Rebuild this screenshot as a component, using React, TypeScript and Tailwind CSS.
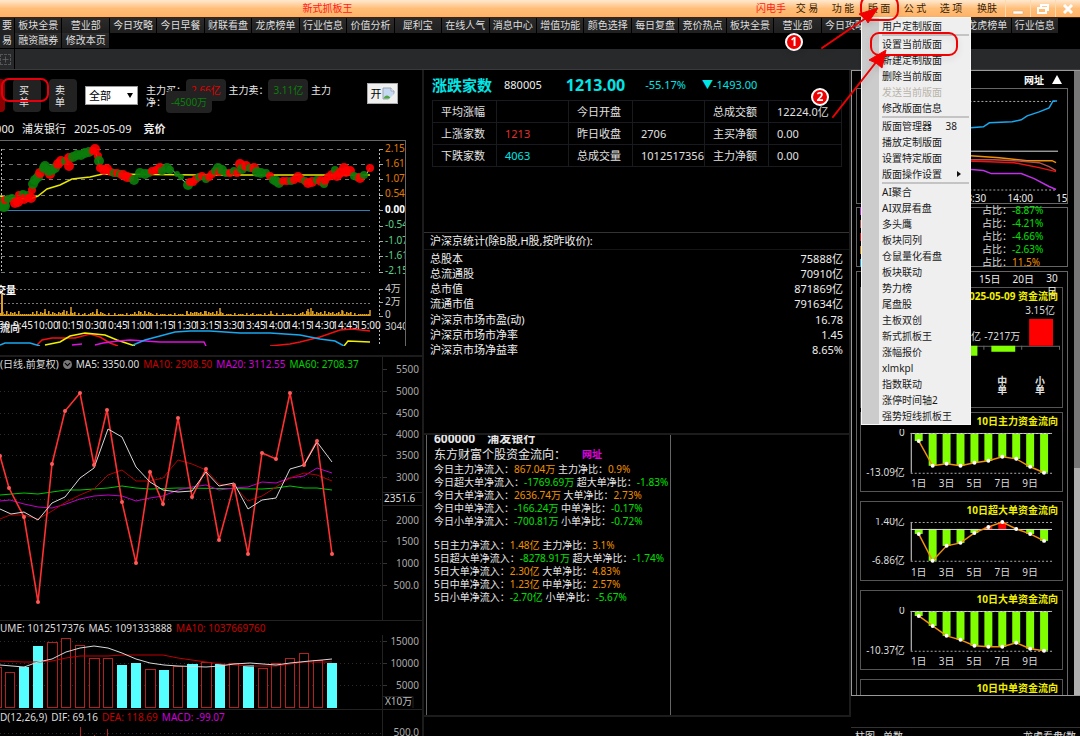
import React from 'react';
import { ChevronDown, Plus } from 'lucide-react';

const navItems = [
  '板块全景', '营业部', '今日攻略', '今日早餐', '财联看盘', '龙虎榜单', '行业信息', '价值分析',
  '犀利宝', '在线人气', '消息中心', '增值功能', '颜色选择', '每日复盘', '竞价热点', '板块全景',
  '营业部', '今日攻略', '今日早餐', '财联看盘', '龙虎榜单', '行业信息',
];

const menuGroups: { label: string; hint?: string; disabled?: boolean; sub?: boolean }[][] = [
  [{ label: '用户定制版面' }],
  [
    { label: '设置当前版面' },
    { label: '新建定制版面' },
    { label: '删除当前版面' },
    { label: '发送当前版面', disabled: true },
    { label: '修改版面信息' },
  ],
  [
    { label: '版面管理器', hint: '38' },
    { label: '播放定制版面' },
    { label: '设置特定版面' },
    { label: '版面操作设置', sub: true },
  ],
  [
    'AI聚合', 'AI双屏看盘', '多头鹰', '板块同列', '仓鼠量化看盘', '板块联动', '势力榜', '尾盘股',
    '主板双创', '新式抓板王', '涨幅报价', 'xlmkpl', '指数联动', '涨停时间轴2', '强势短线抓板王',
  ].map((label) => ({ label })),
];

const R = '#ff0000';
const G = '#0b7d0b';

// x, y, radius, colour
const ticks: [number, number, number, string][] = [
  [2, 204, 7, G], [4, 206, 6, G], [5, 200, 4, R], [8, 199, 4, G], [12, 198, 4, G], [15, 203, 5, R],
  [18, 202, 5, R], [19, 195, 4, R], [23, 194, 4, G], [24, 199, 5, R], [28, 195, 4, G], [28, 198, 4, R],
  [31, 198, 5, R], [32, 190, 4, R], [33, 184, 5, G], [35, 180, 5, G], [38, 177, 5, G], [40, 173, 5, R],
  [44, 168, 5, G], [45, 166, 5, G], [50, 174, 5, R], [49, 171, 5, G], [52, 170, 5, G], [55, 168, 5, G],
  [58, 164, 5, R], [61, 161, 5, R], [65, 161, 4, G], [69, 166, 5, R], [69, 158, 5, R], [73, 157, 5, G],
  [77, 155, 5, G], [81, 155, 5, G], [85, 153, 5, G], [89, 152, 5, G], [95, 149, 5, R], [93, 151, 4, R],
  [98, 156, 4, R], [99, 161, 5, G], [100, 168, 4, R], [104, 170, 5, R], [107, 169, 5, R], [111, 172, 4, R],
  [114, 173, 4, G], [117, 173, 4, R], [120, 174, 4, G], [123, 175, 5, R], [127, 177, 5, R], [130, 178, 4, R],
  [134, 180, 5, G], [140, 173, 5, G], [145, 174, 5, G], [149, 173, 4, G], [152, 171, 4, R], [156, 170, 4, R],
  [160, 168, 5, R], [162, 171, 4, G], [167, 168, 5, G], [170, 170, 4, G], [177, 174, 3, G], [181, 177, 3, G],
  [188, 185, 5, G], [190, 182, 4, R], [193, 182, 4, R], [196, 179, 4, R], [199, 177, 4, G], [202, 176, 4, R],
  [206, 179, 4, G], [209, 177, 4, R], [212, 174, 4, R], [215, 171, 4, G], [218, 168, 5, G], [219, 172, 4, R],
  [222, 170, 5, G], [226, 173, 4, G], [230, 173, 4, R], [234, 171, 4, G], [237, 173, 4, R], [240, 164, 5, R],
  [242, 169, 5, G], [246, 166, 5, R], [250, 168, 4, G], [254, 168, 5, R], [257, 172, 5, G], [261, 173, 5, G],
  [266, 173, 4, G], [270, 176, 4, R], [273, 180, 4, G], [276, 181, 5, G], [279, 183, 5, G], [283, 181, 4, R],
  [287, 181, 4, R], [291, 181, 4, G], [294, 180, 4, R], [298, 177, 5, R], [301, 179, 4, R], [305, 181, 4, G],
  [308, 183, 5, R], [312, 182, 5, R], [317, 180, 4, G], [321, 181, 5, R], [324, 184, 4, G], [325, 181, 4, R],
  [328, 177, 4, R], [332, 175, 5, R], [335, 170, 4, G], [337, 176, 5, R], [340, 173, 5, R], [344, 168, 5, R],
  [346, 172, 5, R], [350, 171, 5, R], [354, 176, 4, G], [357, 177, 4, G], [360, 178, 5, R], [364, 175, 4, G],
  [370, 168, 4, R],
];

const times = ['9:30', '9:45', '10:00', '10:15', '10:30', '10:45', '11:00', '11:15', '11:30', '13:15', '13:30', '13:45', '14:00', '14:15', '14:30', '14:45', '15:00'];

// busy stretches of the session trade roughly two steps higher
const busy: [number, number][] = [[0, 20], [32, 74], [90, 102], [134, 150], [186, 222], [300, 350]];
const minuteBars = Array.from({ length: 185 }, (_, i) => {
  const x = i * 2;
  const lift = busy.some(([from, to]) => x >= from && x <= to) ? 2 : 1;
  return { x, h: lift + ((i * 37 + (i % 7) * 5) % 4 > 1 ? lift : 0) + (i % 3 === 0 ? 1 : 0) };
});

const percentLabels: [number, string, string][] = [
  [149, '2.15%', '#e07b00'], [164, '1.61%', '#e07b00'], [179, '1.07%', '#e07b00'], [194, '0.54%', '#e07b00'],
  [210, '0.00%', '#ffffff'], [225, '-0.54%', '#5fd08a'], [241, '-1.07%', '#5fd08a'], [256, '-1.61%', '#5fd08a'], [271, '-2.15%', '#5fd08a'],
];

const pricePoints: [number, number][] = [
  [-4, 441], [0, 456], [9, 488], [24, 517], [38, 602], [52, 464], [65, 411], [80, 393], [94, 465], [107, 410],
  [122, 502], [136, 563], [150, 472], [163, 504], [178, 418], [192, 497], [206, 469], [219, 540], [234, 485],
  [248, 554], [262, 453], [276, 459], [290, 393], [304, 465], [317, 441], [332, 554],
];

// x, width, top, rising
const volumeBars: [number, number, number, boolean][] = [
  [-8, 10, 667, true], [5, 10, 672, true], [19, 10, 667, false], [33, 10, 646, false], [47, 11, 642, true],
  [61, 10, 638, true], [75, 10, 645, true], [89, 11, 658, true], [103, 10, 658, true], [117, 10, 665, false],
  [131, 10, 663, false], [145, 11, 669, true], [159, 10, 670, false], [173, 10, 666, true], [187, 11, 664, false],
  [201, 11, 662, true], [215, 10, 664, false], [229, 10, 663, true], [243, 11, 665, false], [258, 10, 668, true],
  [271, 10, 663, true], [285, 10, 658, true], [299, 10, 653, true], [313, 10, 660, true], [327, 10, 663, false],
];

const flows: [string, string, string, string][][] = [
  [
    ['今日主力净流入：', '867.04万', '主力净比：', '0.9%'],
    ['今日超大单净流入：', '-1769.69万', '超大单净比：', '-1.83%'],
    ['今日大单净流入：', '2636.74万', '大单净比：', '2.73%'],
    ['今日中单净流入：', '-166.24万', '中单净比：', '-0.17%'],
    ['今日小单净流入：', '-700.81万', '小单净比：', '-0.72%'],
  ],
  [
    ['5日主力净流入：', '1.48亿', '主力净比：', '3.1%'],
    ['5日超大单净流入：', '-8278.91万', '超大单净比：', '-1.74%'],
    ['5日大单净流入：', '2.30亿', '大单净比：', '4.83%'],
    ['5日中单净流入：', '1.23亿', '中单净比：', '2.57%'],
    ['5日小单净流入：', '-2.70亿', '小单净比：', '-5.67%'],
  ],
];

const tenDayCards = [
  { title: '10日主力资金流向', top: '0', low: '-13.09亿', topY: 4, zero: 4, lowY: 44, ys: [12, 37, 35, 37, 34, 32, 28, 30, 38, 44] },
  { title: '10日超大单资金流向', top: '1.40亿', low: '-6.86亿', topY: 4, zero: 11, lowY: 43, ys: [16, 43, 28, 25, 15, 9, 4, 11, 16, 23] },
  { title: '10日大单资金流向', top: '0', low: '-10.37亿', topY: 4, zero: 4, lowY: 44, ys: [9, 19, 29, 33, 39, 40, 40, 36, 42, 44] },
];

const TitleBar = () => (
  <header className="relative z-30 flex h-[18px] items-stretch border-b border-[#3a2410] bg-linear-to-b from-[#ffe9cf] via-[#ffbe78] to-[#ffb266]">
    <h1 className="flex-1 pl-[28%] text-[10px] leading-[17px] text-[#ff1a1a]">新式抓板王</h1>
    <nav className="flex text-[10px] leading-[17px] text-[#3a1d05]">
      <button className="w-9 text-[#ff1a1a]">闪电手</button>
      <button className="w-9">交 易</button>
      <button className="w-9">功 能</button>
      <div className="relative w-9">
        <button className="w-full">版 面</button>
        <LayoutMenu />
      </div>
      <button className="w-9">公 式</button>
      <button className="w-9">选 项</button>
      <button className="w-9">换肤</button>
    </nav>
    <div className="flex text-white">
      <button aria-label="最小化" className="flex w-[25px] items-center justify-center border-l border-[#ffd9ae]">
        <svg viewBox="0 0 12 12" className="size-3"><path d="M1 8h10v3H1Z" fill="#fff" stroke="#d9a06a" strokeWidth="0.500" /></svg>
      </button>
      <button aria-label="还原" className="flex w-[25px] items-center justify-center border-l border-[#ffd9ae]">
        <svg viewBox="0 0 12 12" className="size-3" fill="none" stroke="#fff" strokeWidth="2"><path d="M4 4V2h7v5H9M1 5h8v5H1Z" /></svg>
      </button>
      <button aria-label="关闭" className="flex w-[25px] items-center justify-center border-l border-[#ffd9ae]">
        <svg viewBox="0 0 12 12" className="size-3" stroke="#fff" strokeWidth="3"><path d="M2 2l8 8M10 2l-8 8" /></svg>
      </button>
    </div>
  </header>
);

const LayoutMenu = () => (
  <div className="absolute left-0 top-[17px] w-[110px] border border-[#f8f8f8] bg-[#efefef] text-[#1a1a1a] shadow">
    <div className="border-l-[17px] border-[#cccccc]">
      {menuGroups.map((group, i) => (
        <ul key={i} className={`ml-[3px] mr-px ${i > 0 ? 'border-t-2 border-[#c4c4c4]' : ''}`}>
          {group.map((item) => (
            <li key={item.label}>
              <button
                disabled={item.disabled}
                className={`flex h-4 w-full items-center pr-2 text-left text-[10px] leading-4 ${item.disabled ? 'text-[#b9b4aa]' : ''}`}
              >
                <span className="flex-1">{item.label}</span>
                {item.hint && <span className="pr-1">{item.hint}</span>}
                {item.sub && <svg viewBox="0 0 4 6" className="h-[6px] w-1"><path d="M0 0 4 3 0 6Z" fill="#111" /></svg>}
              </button>
            </li>
          ))}
        </ul>
      ))}
    </div>
  </div>
);

const NavBar = () => (
  <nav className="flex text-[10px] text-[#dedede]">
    <div className="grid w-[14px] shrink-0 grid-rows-2 overflow-hidden">
      <button className="h-[15px] bg-[#222222] leading-[15px]">要</button>
      <button className="h-[15px] bg-[#222222] leading-[15px]">易</button>
    </div>
    <div className="mr-[22px] grid flex-1 grid-cols-22">
      {[...navItems, '融资融券', '修改本页'].map((item, i) => (
        <button key={i} className="h-[15px] overflow-hidden border-l border-black bg-linear-to-b from-[#2b2b2b] to-[#1f1f1f] leading-[15px]">
          {item}
        </button>
      ))}
    </div>
  </nav>
);

const line = (points: [number, number][]) => points.map((p) => p.join(',')).join(' ');

const IntradayChart = () => (
  <svg viewBox="0 141 405 205" className="block w-full" fontSize="10">
    {[149, 164, 179, 195, 226, 241, 256, 272].map((y) => (
      <path key={y} d={`M1 ${y}.5H370`} stroke="#777" strokeDasharray="4 4" />
    ))}
    <path d="M0 289.500H371M0 303.500H371" stroke="#777" strokeDasharray="2 2" />
    <path d="M1.500 149V272M379.500 149V272M379.500 289V316M379.500 326V346" stroke="#bbb" strokeDasharray="2 2" />
    {[149, 164, 179, 195, 210, 226, 241, 256, 272, 289, 302, 316].map((y) => (
      <path key={y} d={`M379 ${y}.5h4`} stroke="#aaa" />
    ))}
    <path d="M0 210.500H370" stroke="#2f7fb5" />
    <path d="M0 196 8 198 30 199 38 196 47 189 60 185 72 179 90 177 103 174 200 175 370 175" fill="none" stroke="#e8e800" strokeWidth="1.500" />
    <path d="M95 150 100 167M168 166 188 185M366 175 370 168" stroke="#ddd" />
    {ticks.map(([x, y, r, color], i) => (
      <circle key={i} cx={x} cy={y} r={r} fill={color} opacity="0.9" />
    ))}
    {percentLabels.map(([y, label, color]) => (
      <text key={label} x="385" y={y + 3} fill={color} fontWeight={label === '0.00%' ? 'bold' : 'normal'}>{label}</text>
    ))}
    {minuteBars.map(({ x, h }) => (
      <rect key={x} x={x} y={316 - h} width="1.600" height={h} fill="#dda020" />
    ))}
    <path d="M2 294V316" stroke="#dda020" strokeWidth="2" />
    <path d="M45 309V316M64 310V316M71 307V316M97 309V316M187 311V316M206 311V316M220 308V316M271 311V316M308 309V316M311 308V316M342 310V316M370 310V316" stroke="#dda020" strokeWidth="1.500" />
    <path d="M0 315.500H370" stroke="#dda020" />
    <text x="16" y="294" fill="#fff" textAnchor="end" fontWeight="bold">交量</text>
    <text x="20" y="332" fill="#ddd" textAnchor="end" fontWeight="bold">流向</text>
    {times.map((time, i) => (
      <text key={time} x={i * 23} y="329" fill="#eee" textAnchor="middle">{time}</text>
    ))}
    {[['4万', 292], ['2万', 305], ['0', 318], ['3040', 330]].map(([label, y]) => (
      <text key={label} x="385" y={y} fill="#ccc">{label}</text>
    ))}
    <g fill="none" strokeWidth="1.500">
      <path d="M37 345 42 340 52 338 75 338 90 334 100 337 110 343 118 346M270 346 290 344 300 342 320 337 340 330 352 329 370 331" stroke="#f01010" />
      <path d="M45 345 60 342 70 336 85 333 105 335 117 340 135 346M344 346 348 341 370 342" stroke="#f0f000" />
      <path d="M72 345 82 344M95 345 103 343 118 341 130 340 160 342 204 342 206 346" stroke="#e010e0" />
      <path d="M0 345 5 343 30 343 40 346M133 345 145 340 160 336 175 332 190 331 210 331 240 333 270 333 300 335 320 339 335 341 344 346" stroke="#18a8f0" />
    </g>
  </svg>
);

const KlineChart = () => (
  <svg viewBox="0 371 422 249" className="block w-full overflow-visible" fontSize="10">
    {[391, 413, 434, 455, 477, 499, 520, 541, 563, 585].map((y) => (
      <path key={y} d={`M0 ${y}.5H382`} stroke="#2a2a2a" strokeDasharray="1 3" />
    ))}
    <path d="M382.500 357V620" stroke="#222" />
    {[369, 391, 413, 434, 455, 477, 520, 541, 563, 585].map((y, i) => (
      <g key={y}>
        <path d={`M383 ${y}.5h4`} stroke="#333" />
        <text x="419" y={y + 4} fill="#a8a8a8" textAnchor="end">
          {['5500', '5000', '4500', '4000', '3500', '3000', '2000', '1500', '1000', '500.0'][i]}
        </text>
      </g>
    ))}
    <path d="M383 492.500H422M383 505.500H422" stroke="#222" />
    <text x="384" y="502" fill="#ddd">2351.6</text>
    <g fill="none">
      <polyline stroke="#00c800" points="0,495 24,493 38,494 52,492 66,490 80,490 94,489 108,488 122,486 136,488 150,489 178,488 262,489 276,488 290,486 304,488 317,488 332,490" />
      <polyline stroke="#c000c8" points="0,501 10,500 24,504 38,507 52,508 66,504 80,499 94,496 108,495 122,496 136,501 150,498 163,496 178,490 192,487 206,485 219,490 234,488 248,487 262,482 276,483 290,478 304,476 317,468 332,473" />
      <polyline stroke="#b00000" points="0,519 10,515 24,515 38,519 52,511 66,502 80,495 94,489 108,475 122,470 136,481 150,481 163,478 178,460 192,464 206,470 219,484 234,486 248,501 262,496 276,487 290,478 304,473 317,475 332,481" />
      <polyline stroke="#ff3030" strokeWidth="1.600" points={line(pricePoints)} />
      <polyline stroke="#d8d8d8" points="0,509 11,514 24,512 38,520 52,503 65,497 80,478 94,468 108,429 122,437 136,467 150,482 163,490 178,492 192,491 206,472 219,486 234,483 248,509 262,500 276,498 290,469 304,465 317,442 332,462" />
    </g>
    {pricePoints.map(([x, y], i) => (
      <circle key={i} cx={x} cy={y} r="2" fill="#ff5a5a" />
    ))}
  </svg>
);

const VolumeChart = () => (
  <svg viewBox="0 635 422 74" className="block w-full" fontSize="10">
    {[641, 663, 685].map((y, i) => (
      <g key={y}>
        <path d={`M0 ${y}.5H382`} stroke="#2a2a2a" strokeDasharray="1 3" />
        <path d={`M383 ${y}.5h4`} stroke="#333" />
        <text x="419" y={y + 4} fill="#a8a8a8" textAnchor="end">{['15000', '10000', '5000'][i]}</text>
      </g>
    ))}
    <path d="M382.500 635V709" stroke="#222" />
    {volumeBars.map(([x, w, top, up]) => up ? (
      <rect key={x} x={x + 0.5} y={top + 0.5} width={w - 1} height={707 - top} fill="#000" stroke="#b32020" />
    ) : (
      <rect key={x} x={x} y={top} width={w} height={708 - top} fill="#55ffff" />
    ))}
    <polyline fill="none" stroke="#c00000" points="0,661 24,662 38,662 52,661 66,658 80,656 108,656 122,655 163,655 178,658 192,660 206,662 222,664 250,666 276,666 290,664 304,662 332,662" />
    <polyline fill="none" stroke="#d8d8d8" points="0,665 24,667 38,662 52,659 66,652 80,648 94,646 108,648 122,653 136,659 150,663 164,665 178,666 206,667 220,666 234,664 250,663 276,665 290,663 310,661 322,660 332,659" />
    <path d="M383 696.500H413V708" fill="none" stroke="#222" />
    <text x="385" y="705" fill="#bbb">X10万</text>
  </svg>
);

const LeftColumn = () => (
  <section className="flex min-w-0 flex-col border-r-2 border-[#1c1c1c]">
    <div className="flex h-12 items-start pt-[9px]">
      <button aria-label="当前" className="h-[33px] w-[5px] rounded-r bg-[#8b0000]" />
      <div className="relative ml-2">
        <button className="flex h-[33px] w-7 flex-col justify-center rounded bg-[#222222] pl-[6px] text-left text-[10px] leading-3 text-[#e8e8e8]">
          <span>买</span><span>单</span>
        </button>
        <div className="pointer-events-none absolute -left-3 -top-px h-6 w-12 rounded-lg border-2 border-red-600" />
      </div>
      <button className="ml-2 flex h-[33px] w-7 flex-col justify-center rounded bg-[#222222] pl-[6px] text-left text-[10px] leading-3 text-[#e8e8e8]">
        <span>卖</span><span>单</span>
      </button>
      <div className="relative ml-2 mt-[7px]">
        <select aria-label="单量" className="block h-[19px] w-[53px] appearance-none border border-[#999] bg-white pl-[3px] text-[11px] leading-4 text-black">
          <option>全部</option>
        </select>
        <svg viewBox="0 0 6 5" className="pointer-events-none absolute right-[5px] top-[7px] h-[5px] w-[6px]"><path d="M0 0h6L3 5Z" fill="#000" /></svg>
      </div>
      <p className="ml-2 mt-[5px] w-[205px] text-[10px] leading-3 text-[#e8e8e8]">
        主力买：<span className="rounded bg-[#222222] px-[5px] py-1 text-[#e00000]">2.66亿</span>{' '}
        主力卖：<span className="rounded bg-[#222222] px-[5px] py-1 text-[#0b7d0b]">3.11亿</span>{' '}
        主力<br />
        净：<span className="rounded bg-[#222222] px-[5px] py-1 text-[#0b7d0b]">-4500万</span>
      </p>
      <button className="ml-auto mr-6 mt-1 flex h-[21px] w-[31px] items-center justify-center border border-[#aaa] bg-[#f0f0f0] text-[11px] leading-4 text-black">
        开
        <svg viewBox="0 0 13 13" className="size-[13px]">
          <path d="M1 1h8l3 3v8H1Z" fill="#c5d9f3" stroke="#9aa6b5" />
          <path d="M9 1v3h3" fill="#fff" stroke="#9aa6b5" />
          <path d="M1.500 11.500C3 8 6 7 9 11.500Z" fill="#4fa53f" />
          <path d="M6 13 13 6v7Z" fill="#f0f0f0" />
        </svg>
      </button>
    </div>
    <div className="flex h-[22px] items-center text-[11px] leading-5 text-[#eeeeee]">
      <span className="flex w-[14px] justify-end overflow-hidden">000</span>
      <span className="ml-2">浦发银行</span>
      <span className="ml-2">2025-05-09</span>
      <span className="ml-3 font-bold">竞价</span>
    </div>
    <div className="mr-4 border-r border-t border-[#666]">
      <IntradayChart />
    </div>
    <div className="mt-[9px] border-t-2 border-[#1c1c1c]">
      <div className="flex h-[14px] items-center gap-1 text-[10px] leading-[14px] text-[#dddddd]">
        <span>(日线.前复权)</span>
        <span className="rounded-full bg-[#777] text-black"><ChevronDown size={9} strokeWidth={3} /></span>
        <span>MA5: 3350.00</span>
        <span className="text-[#c80000]">MA10: 2908.50</span>
        <span className="text-[#d000d8]">MA20: 3112.55</span>
        <span className="text-[#00d000]">MA60: 2708.37</span>
      </div>
      <KlineChart />
    </div>
    <div className="border-t border-[#222222]">
      <div className="flex h-[14px] items-center gap-1 text-[10px] leading-[14px] text-[#dddddd]">
        <span>UME: 1012517376</span>
        <span>MA5: 1091333888</span>
        <span className="text-[#c80000]">MA10: 1037669760</span>
      </div>
      <VolumeChart />
    </div>
    <div className="border-t border-[#222222]">
      <div className="flex h-[14px] items-center gap-1 text-[10px] leading-[14px] text-[#dddddd]">
        <span>D(12,26,9)</span>
        <span>DIF: 69.16</span>
        <span className="text-[#c80000]">DEA: 118.69</span>
        <span className="text-[#d000d8]">MACD: -99.07</span>
      </div>
      <svg viewBox="0 724 422 16" className="block w-full overflow-visible" fontSize="10">
        <path d="M0 733.500H382" stroke="#2a2a2a" strokeDasharray="1 3" />
        <path d="M382.500 710V740" stroke="#222" />
        <path d="M80.500 727V740M94.500 735V740M107.500 729V740" stroke="#b32020" />
        <text x="419" y="736" fill="#a8a8a8" textAnchor="end">500.0</text>
      </svg>
    </div>
  </section>
);

const CenterColumn = () => (
  <section className="min-w-0 border-r-2 border-[#1c1c1c]">
    <div className="h-[162px] pl-2">
      <div className="flex h-[30px] items-center text-[11px] leading-5 text-[#00e5e5]">
        <span className="text-[15px] font-bold">涨跌家数</span>
        <span className="ml-3 text-[#eeeeee]">880005</span>
        <span className="ml-6 text-base font-bold">1213.00</span>
        <span className="ml-5">-55.17%</span>
        <span className="ml-4">▼-1493.00</span>
      </div>
      <table className="w-[410px] max-w-full table-fixed border-collapse text-[11px] leading-4 text-[#e0e0e0] [&_td]:h-[22px] [&_td]:border [&_td]:border-[#181a20] [&_td]:pl-2">
        <colgroup>
          <col className="w-16" />
          <col className="w-[72px]" />
          <col className="w-16" />
          <col className="w-[72px]" />
          <col className="w-16" />
          <col />
        </colgroup>
        <tbody>
          <tr><td>平均涨幅</td><td /><td>今日开盘</td><td /><td>总成交额</td><td>12224.0亿</td></tr>
          <tr><td>上涨家数</td><td className="text-[#e03030]">1213</td><td>昨日收盘</td><td>2706</td><td>主买净额</td><td>0.00</td></tr>
          <tr><td>下跌家数</td><td className="text-[#00e5e5]">4063</td><td>总成交量</td><td>1012517356</td><td>主力净额</td><td>0.00</td></tr>
        </tbody>
      </table>
    </div>
    <div className="h-[201px] border-t border-[#333] text-[11px] leading-[15px] text-[#eeeeee]">
      <h2 className="h-[17px] border-b border-[#151515] pl-[6px] leading-4">沪深京统计(除B股,H股,按昨收价):</h2>
      {[
        [['总股本', '75888亿'], ['总流通股', '70910亿'], ['总市值', '871869亿'], ['流通市值', '791634亿']],
        [['沪深京市场市盈(动)', '16.78'], ['沪深京市场市净率', '1.45'], ['沪深京市场净益率', '8.65%']],
      ].map((rows, i) => (
        <dl key={i} className="pl-[6px] pr-[6px] pt-px">
          {rows.map(([label, value]) => (
            <div key={label} className="flex justify-between"><dt>{label}</dt><dd>{value}</dd></div>
          ))}
        </dl>
      ))}
    </div>
    <div className="flex h-[284px] border-y-2 border-[#1c1c1c] pl-[2px]">
      <div className="w-[58%] overflow-hidden border-x border-[#666] pl-[7px] text-[10px] text-[#e6e6e6]">
        <div className="-mt-1 flex h-[15px] items-center gap-3 text-xs font-bold leading-[15px]"><span>600000</span><span>浦发银行</span></div>
        <div className="flex h-[17px] items-center gap-4 text-xs leading-[17px]">
          <span>东方财富个股资金流向：</span>
          <a href="#funds" className="text-[10px] font-bold text-[#e000e0]">网址</a>
        </div>
        {flows.map((rows, i) => (
          <div key={i} className="mb-[11px] leading-[13px]">
            {rows.map(([label, value, ratioLabel, ratio]) => (
              <p key={label}>
                {label}<span className={value[0] === '-' ? 'text-[#00e000]' : 'text-[#f09000]'}>{value}</span>{' '}
                {ratioLabel}<span className={ratio[0] === '-' ? 'text-[#00e000]' : 'text-[#f09000]'}>{ratio}</span>
              </p>
            ))}
          </div>
        ))}
      </div>
    </div>
  </section>
);

const TenDayCard = ({ title, top, low, topY, zero, lowY, ys }: (typeof tenDayCards)[number]) => (
  <div className="mb-[9px] h-20 border border-[#555]">
    <h3 className="pr-1 text-right text-[10px] font-bold leading-4 text-[#f0f000]">{title}</h3>
    <svg viewBox="0 0 202 62" className="block w-full" fontSize="10" fill="#ddd">
      <text x="44" y={topY + 3} textAnchor="end">{top}</text>
      <text x="44" y={lowY + 3} textAnchor="end">{low}</text>
      {ys.map((y, i) => (
        <rect key={i} x={54 + i * 14} y={Math.min(y, zero)} width="8" height={Math.abs(y - zero)} fill={y < zero ? '#ff0000' : '#80ff00'} />
      ))}
      <path d={`M50.5 ${topY}V${lowY}M50 ${zero}.5H192`} stroke="#ddd" />
      <path d={`M50 ${topY}.5H192M50 ${lowY}.5H192`} stroke="#aaa" strokeDasharray="2 2" />
      <polyline fill="none" stroke="#f0900c" strokeWidth="1.500" points={ys.map((y, i) => `${58 + i * 14},${y}`).join(' ')} />
      {ys.map((y, i) => <circle key={i} cx={58 + i * 14} cy={y} r="2" fill="#fff" />)}
      {['1日', '3日', '5日', '7日', '9日'].map((day, i) => (
        <text key={day} x={58 + i * 28} y="58" textAnchor="middle">{day}</text>
      ))}
    </svg>
  </div>
);

const RightColumn = () => (
  <section className="flex min-w-0 flex-col">
    <div className="flex h-[626px] overflow-hidden border-y border-l border-[#999]">
      <div className="min-w-0 flex-1 pl-1 pr-[6px]">
        <div className="flex h-[17px] items-center justify-end gap-2 pr-[6px] text-[10px] font-bold leading-4 text-white">
          <a href="#source">网址</a>
          <svg viewBox="0 0 10 9" className="h-[9px] w-[10px]"><path d="M5 0 10 9H0Z" fill="#fff" /></svg>
        </div>
        <div className="h-[116px] overflow-hidden border border-[#666]">
          <svg viewBox="857 89 211 114" className="block w-full" fontSize="10" fill="none" strokeWidth="1.500">
            <path d="M870 101.500H1058M870 190.500H1058" stroke="#aaa" strokeWidth="1" strokeDasharray="2 2" />
            <path d="M870 151.500H1059" stroke="#ddd" strokeWidth="1" />
            <path d="M960 129 971 128 984 127 990 123 1013 122 1022 120 1028 116 1040 112 1050 108 1054 101 1058 101" stroke="#18a8f0" />
            <path d="M960 155 971 156 1000 158 1028 161 1053 161 1057 163" stroke="#f09000" />
            <path d="M960 160 995 160 1015 161 1040 163 1050 167 1057 171" stroke="#b05050" />
            <path d="M960 161 990 162 1015 163 1040 168 1057 172" stroke="#f01010" />
            <path d="M960 169 984 171 992 174 1022 174 1035 179 1050 187 1057 190" stroke="#c030e8" />
            <g fill="#eee" stroke="none">
              <text x="974" y="203" textAnchor="middle">13:30</text>
              <text x="1021" y="203" textAnchor="middle">14:00</text>
              <text x="1057" y="203">15:00</text>
            </g>
          </svg>
        </div>
        <div className="mt-[3px] h-[60px] border border-[#666]">
          <ul className="-mt-[4px] text-[10px] leading-[13px] text-[#ddd]">
            {[
              ['bg-[#c030e8]', '-8.87%'], ['bg-[#b05050]', '-4.21%'], ['bg-[#f01010]', '-4.66%'],
              ['bg-[#d08000]', '-2.63%'], ['bg-[#18a8f0]', '11.5%'],
            ].map(([swatch, value]) => (
              <li key={value} className="flex items-center justify-between">
                <span className={`ml-[3px] h-2 w-4 ${swatch}`} />
                <span className="w-[85px]">占比：<span className={value[0] === '-' ? 'text-[#00e000]' : 'text-[#f09000]'}>{value}</span></span>
              </li>
            ))}
          </ul>
        </div>
        <div className="mt-1 border border-[#666] pl-[3px] pr-1">
          <div className="flex h-[15px] justify-end gap-3 pr-[5px] text-[10px] leading-[15px] text-[#eee]">
            <button className="h-[15px]">15日</button>
            <button className="h-[15px]">20日</button>
            <button className="h-[15px] w-3 leading-[13px]">30<br />日</button>
          </div>
          <div className="mb-1 h-[121px] border border-[#555]">
            <h3 className="relative pr-1 text-right text-[10px] font-bold leading-4 text-[#f0f000]">2025-05-09 资金流向</h3>
            <svg viewBox="861 305 202 102" className="block w-full" fontSize="10" fill="#ddd">
              <path d="M870 347.500H1060M984.500 347V351M1022.500 347V351M1060.500 347V351" stroke="#666" />
              <rect x="1030" y="320" width="24" height="27" fill="#ff0000" />
              <rect x="992" y="347" width="24" height="6" fill="#80ff00" />
              <rect x="954" y="347" width="24" height="10" fill="#80ff00" />
              <g textAnchor="middle">
                <text x="1041" y="315">3.15亿</text>
                <text x="1003" y="341">-7217万</text>
                <text x="965" y="341">-1.19亿</text>
              </g>
              <g textAnchor="middle" fontWeight="bold">
                <text x="1003" y="386">中</text>
                <text x="1003" y="395">单</text>
                <text x="1041" y="386">小</text>
                <text x="1041" y="395">单</text>
              </g>
            </svg>
          </div>
          {tenDayCards.map((card) => <TenDayCard key={card.title} {...card} />)}
          <div className="h-20 border border-[#555]">
            <h3 className="pr-1 text-right text-[10px] font-bold leading-4 text-[#f0f000]">10日中单资金流向</h3>
          </div>
        </div>
      </div>
      <div className="w-[6px] bg-[#b0b0b0]">
        <div className="h-[397px] bg-[#777]" />
      </div>
    </div>
    <div className="mt-[31px] flex gap-2 border-t border-[#333] px-1 text-[10px] leading-4 text-[#ddd]">
      <span>柱图</span>
      <span>单数</span>
      <span className="ml-auto">龙虎看盘(数</span>
    </div>
  </section>
);

// numbered call-outs pinned over the menu
const Annotations = () => (
  <svg viewBox="750 0 330 130" className="pointer-events-none absolute right-0 top-0 z-40 h-[130px] w-[330px] drop-shadow-md" fill="none" stroke="#f00000">
    <rect x="861" y="-4" width="37" height="24" rx="9" strokeWidth="2" />
    <rect x="871" y="33" width="86" height="22" rx="8" strokeWidth="2" />
    <path d="M822 48 866 18M833 117 877 61" strokeWidth="2" strokeLinecap="round" />
    <path d="M878 8 868 23 865 18 859 14ZM886 50 882 68 876 63 869 60Z" fill="#f00000" />
    <g stroke="#fff" strokeWidth="2" fill="#f00000">
      <circle cx="794" cy="42" r="8" />
      <circle cx="820" cy="97" r="8" />
    </g>
    <g fill="#fff" stroke="none" fontSize="12" fontWeight="bold" textAnchor="middle">
      <text x="794" y="46">1</text>
      <text x="820" y="101">2</text>
    </g>
  </svg>
);

export default function App() {
  return (
    <div className="relative h-screen w-full overflow-hidden whitespace-nowrap bg-black font-['Noto_Sans','Noto_Sans_CJK_SC',sans-serif]">
      <TitleBar />
      <NavBar />
      <div className="mt-px flex h-[21px] border-b border-[#3a3a3c] bg-[#28292b] text-[#666]">
        <div className="flex w-[15px] items-center border-r border-black">
          <button aria-label="新增" className="border border-dashed border-[#555]"><Plus size={9} /></button>
        </div>
      </div>
      <main className="grid grid-cols-[424fr_427fr_229fr] items-start">
        <LeftColumn />
        <CenterColumn />
        <RightColumn />
      </main>
      <Annotations />
    </div>
  );
}
